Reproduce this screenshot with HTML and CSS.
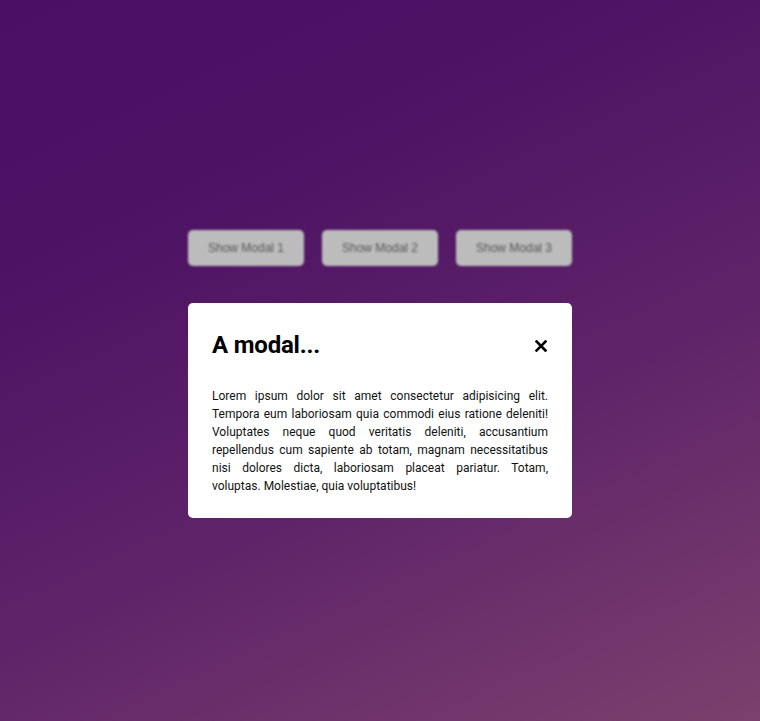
FILE: index.html
```html
<!DOCTYPE html>
<html lang="en">
<head>
<meta charset="utf-8">
<title>Modal</title>
<link rel="stylesheet" href="styles.css">
</head>
<body>
<div class="stage">
  <div class="buttons">
    <button class="btn">Show Modal 1</button>
    <button class="btn">Show Modal 2</button>
    <button class="btn">Show Modal 3</button>
  </div>
  <div class="modal">
    <div class="modal-head">
      <h2 class="modal-title">A modal...</h2>
      <button class="close" aria-label="Close">
        <svg width="12" height="12" viewBox="0 0 12 12"><path d="M1.5 1.5 L10.5 10.5 M10.5 1.5 L1.5 10.5" stroke="#000" stroke-width="2.6" stroke-linecap="square"/></svg>
      </button>
    </div>
    <p class="modal-text">Lorem ipsum dolor sit amet consectetur adipisicing elit. Tempora eum laboriosam quia commodi eius ratione deleniti! Voluptates neque quod veritatis deleniti, accusantium repellendus cum sapiente ab totam, magnam necessitatibus nisi dolores dicta, laboriosam placeat pariatur. Totam, voluptas. Molestiae, quia voluptatibus!</p>
  </div>
</div>
</body>
</html>
```
FILE: styles.css
```css
* { box-sizing: border-box; }
html, body { margin: 0; height: 100%; }
body {
  font-family: Roboto, "Liberation Sans", sans-serif;
  background: linear-gradient(155deg, #4a1063 0%, #4c1264 25%, #5e2368 60%, #7c406d 100%);
  overflow: hidden;
}
.stage {
  display: flex;
  flex-direction: column;
  align-items: center;
  padding-top: 230px;
}
.buttons {
  display: flex;
  gap: 18px;
  width: 384px;
  filter: blur(1.3px);
}
.btn {
  width: 116px;
  height: 36px;
  border: none;
  border-radius: 5px;
  background: #bcbcbc;
  color: #555;
  font-family: "Liberation Sans", Arial, sans-serif;
  font-size: 12px;
  padding: 0;
}
.modal {
  margin-top: 37px;
  width: 384px;
  background: #fff;
  border-radius: 5px;
  padding: 24px 24px 23px;
}
.modal-head {
  display: flex;
  justify-content: space-between;
  align-items: center;
  height: 36px;
}
.modal-title {
  margin: 0;
  font-size: 24px;
  font-weight: 700;
  color: #000;
  line-height: 36px;
  letter-spacing: -0.2px;
}
.close {
  border: none;
  background: none;
  padding: 0;
  width: 12px;
  height: 12px;
  margin-right: 1px;
  margin-top: 1px;
  display: flex;
}
.modal-text {
  margin: 24px 0 0;
  font-size: 12px;
  line-height: 18px;
  text-align: justify;
  color: #111;
}
```
